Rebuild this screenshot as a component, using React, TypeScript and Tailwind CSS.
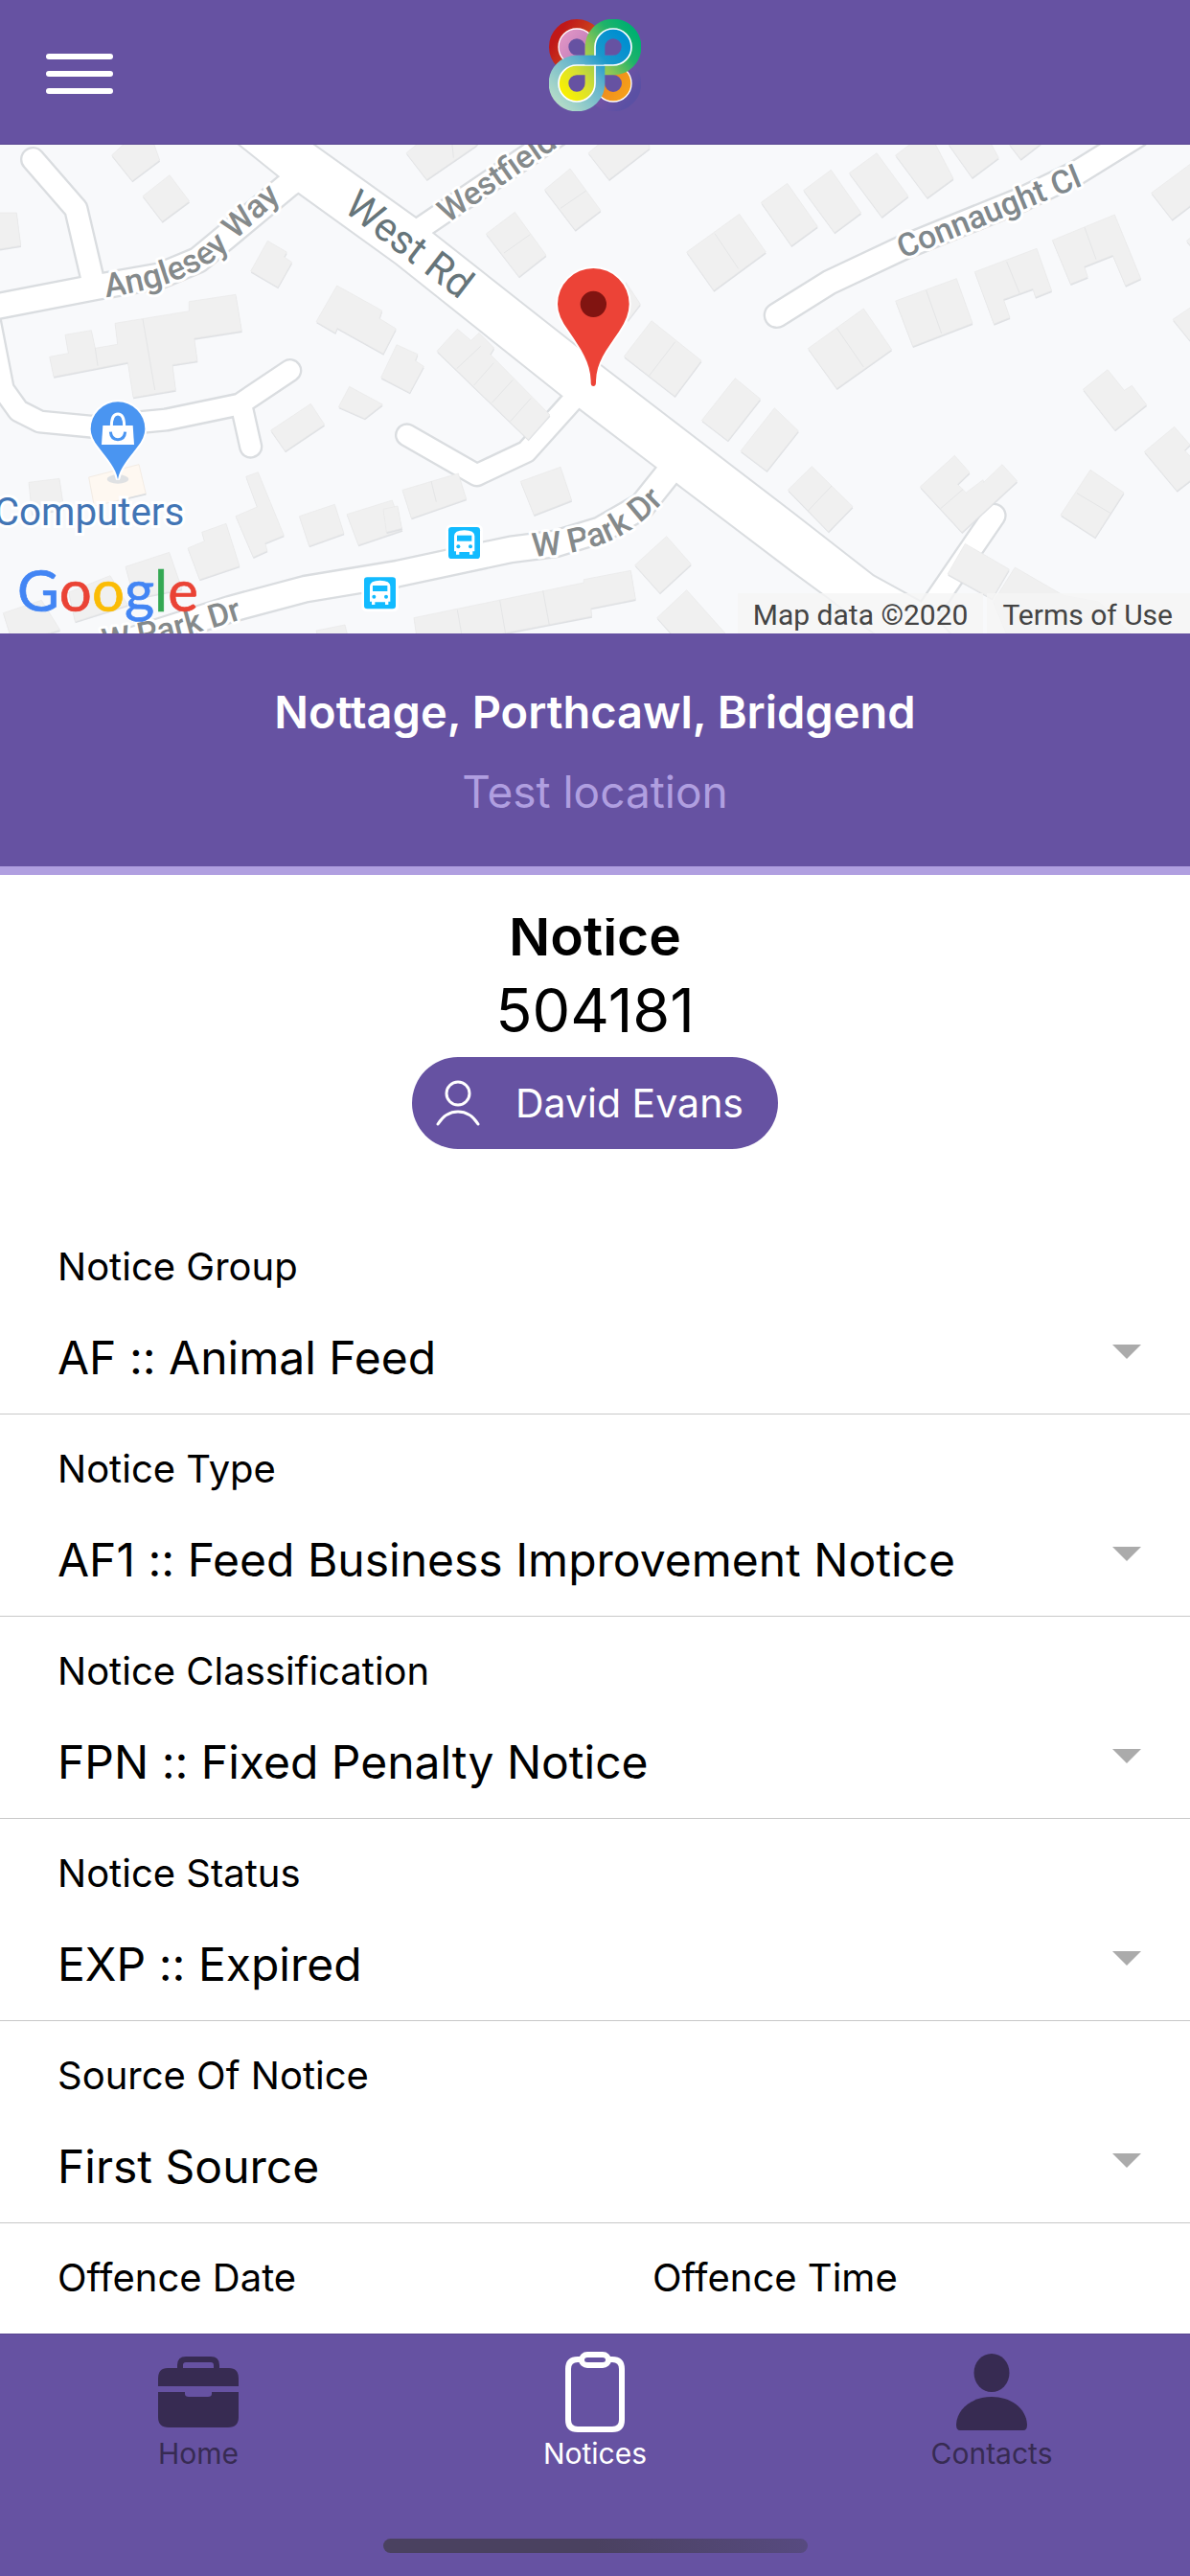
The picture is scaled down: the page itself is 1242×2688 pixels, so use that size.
import React, { useId } from "react";

const BUILDINGS = [
  "350,42 400,-5 478,-5 500,57 414,122",
  "447,170 531,104 593,186 508,249",
  "-10,222 52,222 65,325 -10,337",
  "785,405 838,310 898,345 890,360 914,377 870,455",
  "990,563 1055,450 1196,528 1188,553 1240,585 1200,663 1056,583 1050,598",
  "1193,738 1242,635 1308,665 1300,685 1327,703 1283,785",
  "1060,830 1094,766 1198,822 1142,866",
  "848,903 973,820 1016,885 893,968",
  "155,673 214,662 204,604 286,590 298,646 368,634 360,568 592,530 592,500 738,478 757,592 608,615 618,686 540,698 550,777 417,800 400,690 168,735",
  "90,1066 186,1054 200,1150 100,1165",
  "738,1172 805,1143 770,1048 808,1034 889,1232 830,1256 837,1280 793,1300",
  "588,1272 640,1250 632,1222 708,1195 750,1328 625,1370",
  "393,1330 530,1285 570,1400 420,1430",
  "937,1172 1048,1135 1077,1226 968,1265",
  "1086,1166 1228,1122 1260,1215 1122,1262",
  "10,1475 130,1435 188,1528 40,1570",
  "215,1410 345,1358 400,1450 235,1502",
  "990,1530 1080,1512 1092,1560 1000,1560",
  "1272,35 1315,0 1500,0 1490,12 1336,118",
  "1705,150 1785,84 1881,215 1801,276",
  "1522,288 1612,220 1710,355 1625,422",
  "1842,35 1890,-5 2030,-5 2034,20 1907,118",
  "1368,655 1432,586 1475,622 1500,598 1547,645 1535,665 1722,855 1654,932",
  "1954,672 2040,560 2196,685 2113,796",
  "1960,440 2005,508 1965,560",
  "2197,872 2302,740 2381,805 2279,935",
  "2319,968 2425,833 2500,905 2401,1030",
  "1260,1090 1435,1038 1460,1118 1288,1178",
  "1630,1063 1755,1018 1790,1122 1672,1168",
  "1200,1150 1245,1140 1258,1210 1210,1222",
  "1988,1325 2087,1235 2164,1322 2066,1412",
  "1828,1370 1975,1342 1990,1432 1850,1460 1853,1485 1310,1590 1296,1490 1828,1380",
  "2057,1490 2150,1403 2290,1560 2120,1560",
  "2150,345 2315,226 2398,345 2235,465",
  "2383,190 2465,130 2560,265 2478,325",
  "2516,152 2602,88 2696,222 2613,284",
  "2659,98 2745,35 2844,170 2761,235",
  "2804,42 2860,0 2925,0 2985,115 2903,175",
  "2970,8 3100,0 3127,50 3044,112",
  "3160,8 3260,5 3196,54",
  "2530,647 2704,522 2792,650 2620,772",
  "2804,498 2995,428 3045,568 2858,640",
  "3052,407 3246,334 3293,466 3242,486 3234,460 3142,493 3162,550 3112,570",
  "3295,308 3490,228 3572,428 3524,450 3484,355 3395,390 3406,423 3352,445",
  "3605,160 3740,60 3740,190 3670,243",
  "3672,556 3740,510 3740,640",
  "3715,310 3740,290 3740,340",
  "3391,775 3468,713 3520,778 3544,763 3590,823 3491,902",
  "3583,970 3677,892 3726,948 3709,965 3740,1000 3740,1050 3685,1092",
  "3414,1027 3519,1098 3429,1238 3321,1168",
  "2467,1090 2542,1016 2670,1142 2594,1220",
  "2881,1080 2989,982 3036,1035 2998,1072 3025,1098 3078,1058 3080,1066 3138,1010 3185,1062 3012,1222",
  "3022,1258 3160,1338 3106,1430 2967,1353",
  "3178,1332 3330,1420 3440,1440 3560,1560 3160,1560 3110,1440",
];

const PARTY_WALLS =
  "M298 646l8 55M447 555l38 222M1415 0l5 50M1755 208l80-55M1578 348l82-58M2032 733l82-107M1430 710l75-70M1484 762l62-70M1540 817l66-72M1598 875l64-72M2238 287l74 110M1350 1062l16 65M2620 583l84 122M2900 465l48 135M3152 375l40 98M3396 268l36 100M2530 1155l74-78M2945 1148l70-60M3372 1100l104 62M1432 1465l14 80M1565 1435l18 105M1700 1405l20 108";

const ROADS: { d: string; w: number }[] = [
  { d: "M-20 517L300 455L500 420L620 370L905 133L980 80", w: 74 },
  { d: "M103 55L238 210L292 440", w: 66 },
  { d: "M-35 545L10 775L58 842L125 876L290 892L520 870L750 822L908 716", w: 62 },
  { d: "M756 825L785 954", w: 62 },
  { d: "M1274 918L1493 1043L1648 970L1810 790", w: 62 },
  { d: "M400 1565L720 1463L955 1400L1245 1352L1600 1276L1740 1258L1880 1215L2010 1140L2130 990", w: 76 },
  { d: "M2432 543L2597 440L2830 330L3200 180L3370 98L3560 -20", w: 70 },
  { d: "M3112 1170L2900 1480", w: 66 },
  { d: "M1280 295L1760 -30", w: 64 },
];
const MAIN_ROAD =
  "M735 -5L872 105L937 160L1242 380L1762 795L1812 832L2062 1022L2128 1075L2484 1345L2600 1430L2780 1570L3000 1570L2884 1442L2734 1360L2484 1165L1885 705L1352 285L1302 240L960 -5Z";

function BusStop({ x, y }: { x: number; y: number }) {
  return (
    <g transform={`translate(${x} ${y})`}>
      <rect x="-8" y="-8" width="116" height="116" rx="16" fill="#fff" />
      <rect width="99" height="99" rx="10" fill="#12bbff" />
      <path fill="#fff" d="M18 28Q18 10 50 10T82 28V76H76V86H66V78H34V86H24V76H18Z" />
      <path fill="#12bbff" d="M27 26h46v18H27z" />
      <circle cx="31" cy="61" r="6" fill="#12bbff" />
      <circle cx="69" cy="61" r="6" fill="#12bbff" />
    </g>
  );
}

function MapDrawing() {
  return (
    <svg
      className="block h-full w-full font-[Roboto,sans-serif]"
      viewBox="0 9 3726 1530"
      preserveAspectRatio="xMidYMid slice"
      role="img"
      aria-label="Map of Nottage, Porthcawl"
    >
      <rect y="0" width="3726" height="1560" fill="#f8f9fb" />
      <g fill="none" stroke="#dadde0" strokeLinecap="round" strokeLinejoin="round">
        {ROADS.map((r) => (
          <path key={r.d} d={r.d} strokeWidth={r.w + 14} />
        ))}
        <path d={MAIN_ROAD} strokeWidth="12" />
      </g>
      <g fill="none" stroke="#fff" strokeLinecap="round" strokeLinejoin="round">
        {ROADS.map((r) => (
          <path key={r.d} d={r.d} strokeWidth={r.w} />
        ))}
        <path d={MAIN_ROAD} fill="#fff" stroke="none" />
      </g>
      {BUILDINGS.map((p) => (
        <g key={p}>
          <polygon points={p} fill="#dbdee1" transform="translate(1 5)" opacity="0.9" />
          <polygon points={p} fill="#f0f0f0" stroke="#e8e8e8" strokeWidth="2" />
        </g>
      ))}
      <path d={PARTY_WALLS} stroke="#e4e5e6" strokeWidth="3" fill="none" />
      <path d="M278 1050L435 1010L457 1103L295 1140Z" fill="#fef8f1" stroke="#f3ece4" strokeWidth="3" />
      <path d="M385 1120L457 1103" stroke="#dbdee1" strokeWidth="5" />

      <defs>
        <path id="lbl-anglesey" d="M332 486Q620 448 730 315Q820 230 940 122" />
        <path id="lbl-park" d="M1668 1298Q1890 1290 2010 1188Q2060 1150 2120 1080" />
        <path id="lbl-park2" d="M325 1596Q535 1569 800 1480" />
        <path id="lbl-connaught" d="M2826 366L3500 92" />
      </defs>
      <g fontWeight="500" fontSize="101" fill="#858a8b" stroke="#fff" strokeWidth="18" strokeLinejoin="round" paintOrder="stroke">
        <text fontSize="104"><textPath href="#lbl-anglesey">Anglesey Way</textPath></text>
        <text fontSize="104"><textPath href="#lbl-park">W Park Dr</textPath></text>
        <text><textPath href="#lbl-park2">W Park Dr</textPath></text>
        <text fill="#80888c"><textPath href="#lbl-connaught">Connaught Cl</textPath></text>
        <text transform="translate(1402 256) rotate(-35)">Westfield</text>
        <text transform="translate(1072 214) rotate(37.5)" fontWeight="400" fontSize="126" fill="#66757a">West Rd</text>
      </g>
      <text x="577" y="1200" textAnchor="end" fontSize="121" fill="#4275b5" stroke="#fff" strokeWidth="18" paintOrder="stroke">
        Computers
      </text>

      <ellipse cx="369" cy="1056" rx="34" ry="14" fill="#dfe1e3" />
      <path
        d="M369 1057C362 1020 340 998 310 958Q284 926 284 899A85 85 0 0 1 454 899Q454 926 428 958C398 998 376 1020 369 1057Z"
        fill="#4a95f1" stroke="#fff" strokeWidth="12" paintOrder="stroke"
      />
      <path d="M322 888H416L420 948H318Z" fill="#fff" />
      <path d="M349 890Q349 852 369 852T389 890" fill="none" stroke="#fff" strokeWidth="9" />
      <path d="M346 908Q348 932 369 932T392 908" fill="none" stroke="#4a95f1" strokeWidth="9" />

      <BusStop x={1140} y={1363} />
      <BusStop x={1404} y={1206} />

      <path
        d="M1858 765C1850 765 1850 758 1850 748C1848 690 1820 650 1782 594Q1746 548 1746 508A112 112 0 0 1 1970 508Q1970 548 1938 594C1896 655 1868 690 1866 748C1866 758 1866 765 1858 765Z"
        fill="#ec4337" stroke="#fff" strokeWidth="12" paintOrder="stroke"
      />
      <circle cx="1858" cy="508" r="41" fill="#811411" />

      <text x="54" y="1470" fontSize="180" strokeWidth="2" className="font-[Lato,sans-serif]">
        <tspan fill="#4285f4" stroke="#4285f4">G</tspan>
        <tspan fill="#ea4335" stroke="#ea4335">o</tspan>
        <tspan fill="#fbbc05" stroke="#fbbc05">o</tspan>
        <tspan fill="#4285f4" stroke="#4285f4">g</tspan>
        <tspan fill="#34a853" stroke="#34a853">l</tspan>
        <tspan fill="#ea4335" stroke="#ea4335">e</tspan>
      </text>
    </svg>
  );
}

function Logo() {
  const id = useId();
  return (
    <svg className="size-24" viewBox="38 60 288 288" role="img" aria-label="Logo">
      <defs>
        <linearGradient id={`${id}r`} gradientUnits="userSpaceOnUse" x1="60" y1="120" x2="300" y2="280">
          <stop offset="0" stopColor="#c01818" />
          <stop offset="0.45" stopColor="#d05a20" />
          <stop offset="0.7" stopColor="#ee8a1c" />
          <stop offset="1" stopColor="#f6a21a" />
        </linearGradient>
        <linearGradient id={`${id}p`} gradientUnits="userSpaceOnUse" x1="80" y1="120" x2="310" y2="290">
          <stop offset="0" stopColor="#de93c4" />
          <stop offset="0.4" stopColor="#b878b8" />
          <stop offset="0.7" stopColor="#7453a4" />
          <stop offset="1" stopColor="#5a50a4" />
        </linearGradient>
        <linearGradient id={`${id}g`} gradientUnits="userSpaceOnUse" x1="310" y1="110" x2="80" y2="290">
          <stop offset="0" stopColor="#00b070" />
          <stop offset="0.2" stopColor="#1fb36a" />
          <stop offset="0.45" stopColor="#8cc655" />
          <stop offset="0.75" stopColor="#d8e030" />
          <stop offset="1" stopColor="#faf000" />
        </linearGradient>
        <linearGradient id={`${id}b`} gradientUnits="userSpaceOnUse" x1="270" y1="120" x2="60" y2="320">
          <stop offset="0" stopColor="#008fd0" />
          <stop offset="0.3" stopColor="#1a98cc" />
          <stop offset="0.5" stopColor="#5cb0cc" />
          <stop offset="1" stopColor="#b4dcc8" />
        </linearGradient>
      </defs>
      <g fill="none">
        <path strokeWidth="32" stroke={`url(#${id}p)`} d="M167 189H125A42 42 0 1 1 167 147V261A72 72 0 1 0 239 189Z" />
        <path strokeWidth="30" stroke={`url(#${id}r)`} d="M197 147A72 72 0 1 0 125 219H239A42 42 0 1 1 197 261Z" />
        <path strokeWidth="4" stroke="#fff" d="M182 147A57 57 0 1 0 125 204H239A57 57 0 1 1 182 261Z" />
        <path strokeWidth="32" stroke={`url(#${id}g)`} d="M167 147A72 72 0 1 1 239 219H125A42 42 0 1 0 167 261Z" />
        <path strokeWidth="32" stroke={`url(#${id}b)`} d="M197 147A42 42 0 1 1 239 189H125A72 72 0 1 0 197 261Z" />
        <path strokeWidth="5" stroke="#fff" d="M182 147A57 57 0 1 1 239 204H125A57 57 0 1 0 182 261Z" />
        <path strokeWidth="29" stroke={`url(#${id}b)`} d="M150 188H210" />
      </g>
    </svg>
  );
}

function Field({ label, value }: { label: string; value: string }) {
  const id = useId();
  return (
    <div className="border-b border-[#c8c8c8] pt-8 pb-[25px]">
      <label htmlFor={id} className="block px-[60px] text-[40px] leading-[50px]">
        {label}
      </label>
      <div className="relative mt-9">
        <select
          id={id}
          defaultValue={value}
          className="block h-[67px] w-full appearance-none bg-transparent pr-24 pl-[60px] text-[48px] leading-[67px] text-black outline-none"
        >
          <option>{value}</option>
        </select>
        <svg className="pointer-events-none absolute top-5 right-[51px] h-[15px] w-[30px]" viewBox="0 0 30 15" aria-hidden="true">
          <path d="M0 0H30L15 15Z" fill="#ababab" />
        </svg>
      </div>
    </div>
  );
}

const FIELDS = [
  ["Notice Group", "AF :: Animal Feed"],
  ["Notice Type", "AF1 :: Feed Business Improvement Notice"],
  ["Notice Classification", "FPN :: Fixed Penalty Notice"],
  ["Notice Status", "EXP :: Expired"],
  ["Source Of Notice", "First Source"],
];

function HomeIcon() {
  return (
    <svg className="h-[88px] w-[88px]" viewBox="0 0 88 88" fill="currentColor" aria-hidden="true">
      <path d="M22 19V16Q22 7 31 7H57Q66 7 66 16V19H76Q86 19 86 30V38H2V30Q2 19 12 19ZM28 19H60V16Q60 13 57 13H31Q28 13 28 16Z" fillRule="evenodd" />
      <path d="M2 44H30V46Q30 49 34 49H54Q58 49 58 46V44H86V70Q86 81 75 81H13Q2 81 2 70Z" />
    </svg>
  );
}

function NoticesIcon() {
  return (
    <svg className="h-[88px] w-[88px]" viewBox="0 0 88 88" fill="none" stroke="currentColor" strokeWidth="6" aria-hidden="true">
      <path d="M30 10H26Q16 10 16 20V73Q16 83 26 83H62Q72 83 72 73V20Q72 10 62 10H58" />
      <rect x="30" y="5" width="28" height="11" rx="6" />
    </svg>
  );
}

function ContactsIcon() {
  return (
    <svg className="h-[88px] w-[88px]" viewBox="0 0 88 88" fill="currentColor" aria-hidden="true">
      <ellipse cx="44" cy="24" rx="18.500" ry="20" />
      <path d="M11 84Q7 84 7 78C8 60 25 49 44 49S80 60 81 78Q81 84 77 84Z" />
    </svg>
  );
}

const TABS = [
  { name: "Home", Icon: HomeIcon, active: false },
  { name: "Notices", Icon: NoticesIcon, active: true },
  { name: "Contacts", Icon: ContactsIcon, active: false },
];

export default function App() {
  return (
    <div className="flex h-screen flex-col overflow-hidden bg-white font-[Inter,sans-serif] text-black [font-feature-settings:'calt'_0]">
      <header className="relative flex h-[151px] shrink-0 justify-center border-b border-[#594691] bg-[#6652a2] pt-5">
        <button type="button" aria-label="Open menu" className="absolute top-14 left-12 flex flex-col gap-3">
          <span className="h-[6px] w-[70px] rounded-full bg-white" />
          <span className="h-[6px] w-[70px] rounded-full bg-white" />
          <span className="h-[6px] w-[70px] rounded-full bg-white" />
        </button>
        <Logo />
      </header>

      <main className="min-h-0 flex-1 overflow-hidden">
        <div className="relative h-[510px] overflow-hidden">
          <MapDrawing />
          <div className="absolute right-0 bottom-0 flex gap-1 font-[Roboto,sans-serif] text-[30px] leading-[38px] text-[#444]">
            <span className="bg-[#f5f5f5]/80 px-4 pt-1">Map data ©2020</span>
            <a href="#terms" className="bg-[#f5f5f5]/80 pt-1 pr-[18px] pl-4">Terms of Use</a>
          </div>
        </div>

        <section className="border-b-[9px] border-[#b09fe0] bg-[#6652a2] pt-[50px] pb-[46px] text-center">
          <h1 className="text-[47px] leading-[64px] font-semibold text-white">Nottage, Porthcawl, Bridgend</h1>
          <p className="mt-5 text-[46px] leading-[63px] text-[#b09fe0]">Test location</p>
        </section>

        <section className="flex flex-col items-center pt-[45px]">
          <h2 className="flex h-[50px] items-end overflow-hidden text-[57px] leading-[62px] font-semibold">Notice</h2>
          <p className="mt-3 text-[63px] leading-[68px]">504181</p>
          <button type="button" className="mt-[15px] flex h-24 items-center gap-[36px] rounded-full bg-[#6652a2] pr-[36px] pl-6 text-white">
            <svg className="h-12 w-12" viewBox="0 0 48 48" fill="none" stroke="currentColor" strokeWidth="3" strokeLinecap="round" aria-hidden="true">
              <circle cx="24" cy="14" r="12" />
              <path d="M3 46C8 38 15 33 24 33S40 38 45 46" />
            </svg>
            <span className="text-[41px] leading-[50px]">David Evans</span>
          </button>
        </section>

        <form className="mt-[66px]">
          {FIELDS.map(([label, value]) => (
            <Field key={label} label={label} value={value} />
          ))}
          <div className="grid grid-cols-2 pt-8 text-[40px] leading-[50px]">
            <span className="pl-[60px]">Offence Date</span>
            <span className="pl-[60px]">Offence Time</span>
          </div>
        </form>
      </main>

      <nav className="shrink-0 border-t border-[#594691] bg-[#6652a2] pt-4 pb-6">
        <div className="grid grid-cols-3">
          {TABS.map(({ name, Icon, active }) => (
            <a
              key={name}
              href={`#${name.toLowerCase()}`}
              aria-current={active ? "page" : undefined}
              className={`flex flex-col items-center text-[30px] leading-[40px] ${active ? "text-white" : "text-[#372b52]"}`}
            >
              <Icon />
              <span>{name}</span>
            </a>
          ))}
        </div>
        <div className="mx-auto mt-[69px] h-[15px] w-[443px] rounded-full bg-linear-to-r from-[#4a4160] via-[#4a4160] to-[#574a80]" />
      </nav>
    </div>
  );
}
